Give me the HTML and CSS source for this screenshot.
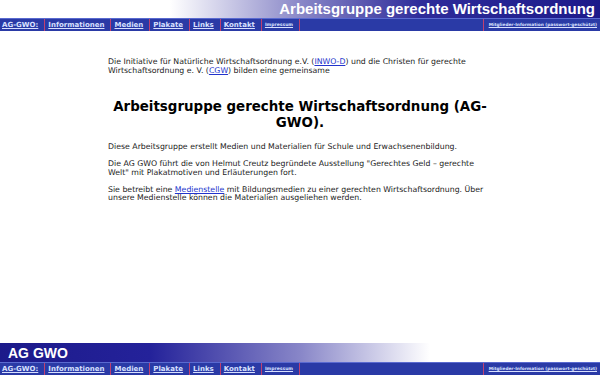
FILE: index.html
```html
<!DOCTYPE html>
<html lang="de">
<head>
<meta charset="utf-8">
<title>AG GWO</title>
<link rel="stylesheet" href="styles.css">
</head>
<body>
<div class="page">
  <header class="top">
    <div class="title">Arbeitsgruppe gerechte Wirtschaftsordnung</div>
  </header>
  <nav class="nav">
    <div class="nav-left">
      <a class="item" href="#">AG-GWO:</a>
      <a class="item" href="#">Informationen</a>
      <a class="item" href="#">Medien</a>
      <a class="item" href="#">Plakate</a>
      <a class="item" href="#">Links</a>
      <a class="item" href="#">Kontakt</a>
      <a class="item small" href="#">Impressum</a>
    </div>
    <a class="item small right" href="#">Mitglieder-Information (passwort-geschützt)</a>
  </nav>
  <main class="content">
    <p>Die Initiative für Natürliche Wirtschaftsordnung e.V. (<a href="#">INWO-D</a>) und die Christen für gerechte Wirtschaftsordnung e. V. (<a href="#">CGW</a>) bilden eine gemeinsame</p>
    <h1>Arbeitsgruppe gerechte Wirtschaftsordnung (AG-GWO).</h1>
    <p>Diese Arbeitsgruppe erstellt Medien und Materialien für Schule und Erwachsenenbildung.</p>
    <p>Die AG GWO führt die von Helmut Creutz begründete Ausstellung "Gerechtes Geld – gerechte Welt" mit Plakatmotiven und Erläuterungen fort.</p>
    <p>Sie betreibt eine <a href="#">Medienstelle</a> mit Bildungsmedien zu einer gerechten Wirtschaftsordnung. Über unsere Medienstelle können die Materialien ausgeliehen werden.</p>
  </main>
  <footer class="bottom">
    <div class="brand">AG GWO</div>
  </footer>
  <nav class="nav">
    <div class="nav-left">
      <a class="item" href="#">AG-GWO:</a>
      <a class="item" href="#">Informationen</a>
      <a class="item" href="#">Medien</a>
      <a class="item" href="#">Plakate</a>
      <a class="item" href="#">Links</a>
      <a class="item" href="#">Kontakt</a>
      <a class="item small" href="#">Impressum</a>
    </div>
    <a class="item small right" href="#">Mitglieder-Information (passwort-geschützt)</a>
  </nav>
</div>
</body>
</html>
```
FILE: styles.css
```css
html, body {
  margin: 0;
  padding: 0;
  background: #ffffff;
}
.page {
  display: flex;
  flex-direction: column;
  min-height: 100vh;
  font-family: "DejaVu Sans", Verdana, sans-serif;
}
.top {
  height: 18px;
  background: linear-gradient(to right, #ffffff 0px, #ffffff 170px, #8a88c8 300px, #2e2c9a 420px, #1c1a8a 600px);
  display: flex;
  justify-content: flex-end;
  align-items: center;
}
.title {
  font-family: "Liberation Sans", Arial, sans-serif;
  font-weight: bold;
  font-size: 15px;
  color: #ffffff;
  padding-right: 5px;
  line-height: 18px;
}
.nav {
  height: 13px;
  background: #2a3aa6;
  border-top: 1px solid #5a6ad0;
  display: flex;
  justify-content: space-between;
  align-items: center;
  box-sizing: border-box;
}
.nav-left {
  display: flex;
  align-items: center;
  height: 100%;
}
.item {
  font-weight: bold;
  font-size: 7px;
  color: #d8e0ff;
  text-decoration: underline;
  padding: 0 6px 0 3px;
  border-right: 1px solid #c04070;
  line-height: 12px;
  height: 12px;
}
.item:first-child {
  padding-left: 2px;
}
.item.small {
  font-size: 4.5px;
}
.item.right {
  border-right: none;
  border-left: 1px solid #c04070;
  padding: 0 3px 0 5px;
  font-size: 4.3px;
}
.content {
  flex: 1;
  width: 384px;
  margin: 0 auto;
  padding-top: 27px;
  font-size: 7.8px;
  line-height: 8.5px;
  color: #222222;
}
.content p {
  margin: 0 0 8.5px 0;
}
.content a {
  color: #2233cc;
}
.content h1 {
  font-size: 13.4px;
  line-height: 16px;
  text-align: center;
  margin: 24px 0 12px 0;
  color: #000000;
}
.bottom {
  height: 19px;
  background: linear-gradient(to right, #1c1a8a 0px, #24229a 150px, #8886c8 300px, #ffffff 430px);
  display: flex;
  align-items: center;
}
.brand {
  font-family: "Liberation Sans", Arial, sans-serif;
  font-weight: bold;
  font-size: 14px;
  color: #ffffff;
  padding-left: 8px;
}
```
